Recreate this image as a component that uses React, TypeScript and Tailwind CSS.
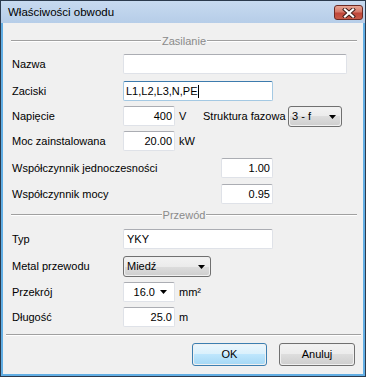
import React from "react";

function Box({ w, children, align = "right", focused = false }: { w: string; children?: React.ReactNode; align?: "left" | "right"; focused?: boolean }) {
  const border = focused
    ? "border-[#a4c9e3] border-t-[#3d7bad]"
    : "border-[#dfe2e8] border-t-[#abadb3]";
  return (
    <div className={`${w} h-[20px] bg-white border ${border} rounded-[2px] flex items-center ${align === "right" ? "justify-end pr-[2px]" : "justify-start pl-[2px]"} leading-none`}>
      {children}
    </div>
  );
}

function Arrow() {
  return (
    <svg width="7" height="4" viewBox="0 0 7 4" className="block">
      <path d="M0 0H7L3.5 4Z" fill="#000" />
    </svg>
  );
}

function Select({ w, text }: { w: string; text: string }) {
  return (
    <div className={`${w} h-[21px] rounded-[3px] border border-[#707070] p-[1px]`}>
      <div className="w-full h-full rounded-[2px] bg-[linear-gradient(#f2f2f2_0%,#ebebeb_50%,#dddddd_50%,#cfcfcf_100%)] flex items-center justify-between pl-[2px] pr-[4px] leading-none">
        <span>{text}</span>
        <Arrow />
      </div>
    </div>
  );
}

function Sep({ label, mt }: { label: string; mt: string }) {
  return (
    <div className={`flex items-center h-[14px] ${mt} ml-[8px] mr-[6px]`}>
      <div className="flex-1 h-[2px] border-t border-t-[#a0a0a0] border-b border-b-white" />
      <span className="px-[1px] text-[#8a8a8a] leading-none">{label}</span>
      <div className="flex-1 h-[2px] border-t border-t-[#a0a0a0] border-b border-b-white" />
    </div>
  );
}

export default function App() {
  return (
    <div className="w-[366px] h-[377px] border border-[#2b3a4d] flex flex-col font-['Liberation_Sans',Arial,sans-serif] text-[11px] text-black overflow-hidden">
      <div className="h-[22px] shrink-0 flex items-center justify-between pl-[7px] pr-[2px] bg-[linear-gradient(180deg,#c7daf0_0%,#b6cde8_100%)]">
        <span className="text-[11.5px] pt-[2px] text-black">Właściwości obwodu</span>
        <div className="w-[29px] h-[15px] mt-[1px] rounded-[3px] border border-[#6b2a24] bg-[linear-gradient(#e7a594_0%,#d5796a_45%,#c0473a_55%,#c75a48_100%)] flex items-center justify-center">
          <svg width="14" height="10" viewBox="0 0 14 10">
            <path d="M3 1.5L11 8.5M11 1.5L3 8.5" stroke="#3b1a16" strokeWidth="4" strokeLinecap="square" />
            <path d="M3 1.5L11 8.5M11 1.5L3 8.5" stroke="#ffffff" strokeWidth="2.2" strokeLinecap="square" />
          </svg>
        </div>
      </div>
      <div className="flex-1 flex flex-col px-[2px] pb-[2px] bg-[#62aee4]">
        <div className="flex-1 bg-[#f0f0f0] flex flex-col">
          <Sep label="Zasilanie" mt="mt-[11px]" />

          <div className="flex items-center h-[20px] mt-[6px] pl-[9px]">
            <span className="w-[111px]">Nazwa</span>
            <Box w="w-[224px]" />
          </div>

          <div className="flex items-center h-[20px] mt-[7px] pl-[9px]">
            <span className="w-[111px]">Zaciski</span>
            <Box w="w-[150px]" align="left" focused>
              <span>L1,L2,L3,N,PE</span>
              <span className="w-[1px] h-[13px] bg-black" />
            </Box>
          </div>

          <div className="flex items-start h-[21px] mt-[5px] pl-[9px]">
            <span className="w-[111px] h-[20px] flex items-center">Napięcie</span>
            <Box w="w-[52px]">400</Box>
            <span className="ml-[4px] w-[24px] h-[20px] flex items-center">V</span>
            <span className="w-[85px] h-[20px] flex items-center">Struktura fazowa</span>
            <Select w="w-[54px]" text="3 - f" />
          </div>

          <div className="flex items-center h-[20px] mt-[4px] pl-[9px]">
            <span className="w-[111px]">Moc zainstalowana</span>
            <Box w="w-[52px]">20.00</Box>
            <span className="ml-[4px]">kW</span>
          </div>

          <div className="flex items-center h-[20px] mt-[7px] pl-[9px]">
            <span className="w-[209px]">Współczynnik jednoczesności</span>
            <Box w="w-[52px]">1.00</Box>
          </div>

          <div className="flex items-center h-[20px] mt-[6px] pl-[9px]">
            <span className="w-[209px]">Współczynnik mocy</span>
            <Box w="w-[52px]">0.95</Box>
          </div>

          <Sep label="Przewód" mt="mt-[4px]" />

          <div className="flex items-center h-[20px] mt-[7px] pl-[9px]">
            <span className="w-[111px]">Typ</span>
            <Box w="w-[150px]" align="left">
              <span className="pl-[1px]">YKY</span>
            </Box>
          </div>

          <div className="flex items-center h-[21px] mt-[7px] pl-[9px]">
            <span className="w-[111px]">Metal przewodu</span>
            <Select w="w-[88px]" text="Miedź" />
          </div>

          <div className="flex items-center h-[20px] mt-[5px] pl-[9px]">
            <span className="w-[111px]">Przekrój</span>
            <div className="w-[52px] h-[20px] bg-white border border-[#dfe2e8] border-t-[#abadb3] rounded-[2px] flex items-center justify-end leading-none">
              <span className="pr-[5px]">16.0</span>
              <div className="w-[14px] flex justify-start pr-[3px]">
                <Arrow />
              </div>
            </div>
            <span className="ml-[4px]">mm²</span>
          </div>

          <div className="flex items-center h-[20px] mt-[5px] pl-[9px]">
            <span className="w-[111px]">Długość</span>
            <Box w="w-[52px]">25.0</Box>
            <span className="ml-[4px]">m</span>
          </div>

          <div className="h-[2px] mt-[7px] ml-[3px] mr-[2px] border-t border-t-[#a0a0a0] border-b border-b-white" />

          <div className="flex justify-end gap-[12px] mt-[7px] pr-[8px]">
            <div className="w-[75px] h-[23px] rounded-[3px] border border-[#3c7fb1] p-[1px]">
              <div className="w-full h-full rounded-[2px] bg-[linear-gradient(#eaf6fd_0%,#d9f0fc_50%,#bee6fd_50%,#a7d9f5_100%)] flex items-center justify-center leading-none">OK</div>
            </div>
            <div className="w-[76px] h-[23px] rounded-[3px] border border-[#707070] p-[1px]">
              <div className="w-full h-full rounded-[2px] bg-[linear-gradient(#f2f2f2_0%,#ebebeb_50%,#dddddd_50%,#cfcfcf_100%)] flex items-center justify-center leading-none">Anuluj</div>
            </div>
          </div>
        </div>
      </div>
    </div>
  );
}
